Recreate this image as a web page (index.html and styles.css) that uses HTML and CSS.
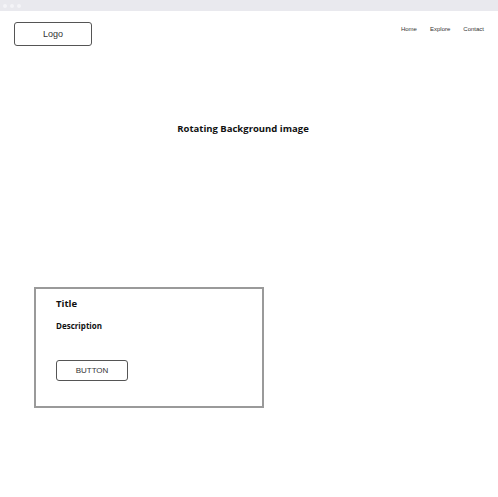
FILE: index.html
```html
<!DOCTYPE html>
<html lang="en">

<head>
    <meta charset="UTF-8">
    <title>Landing</title>
    <link rel="stylesheet" href="styles.css">
</head>

<body>
    <div class="chrome">
        <span class="dot"></span>
        <span class="dot"></span>
        <span class="dot"></span>
    </div>
    <header class="header">
        <div class="logo">Logo</div>
        <nav class="nav">
            <a href="#">Home</a>
            <a href="#">Explore</a>
            <a href="#">Contact</a>
        </nav>
    </header>
    <section class="hero">
        <h1>Rotating Background image</h1>
    </section>
    <div class="card">
        <h2>Title</h2>
        <p>Description</p>
        <button class="btn">BUTTON</button>
    </div>
</body>

</html>
```

FILE: styles.css
```css
* {
    margin: 0;
    padding: 0;
    box-sizing: border-box;
}

body {
    width: 498px;
    height: 497px;
    background: #fff;
    font-family: "Open Sans", "Noto Sans", sans-serif;
    color: #111;
}

.chrome {
    height: 11px;
    background: #e9e9ee;
    display: flex;
    align-items: center;
    gap: 3px;
    padding-left: 3px;
}

.chrome .dot {
    width: 4px;
    height: 4px;
    border-radius: 50%;
    background: #f4f4f7;
}

.header {
    display: flex;
    justify-content: space-between;
    align-items: flex-start;
    padding: 11px 14px 0 14px;
}

.logo {
    width: 78px;
    height: 24px;
    border: 1px solid #555;
    border-radius: 3px;
    font-family: "Liberation Sans", Arial, sans-serif;
    font-size: 9px;
    color: #333;
    display: flex;
    align-items: center;
    justify-content: center;
}

.nav {
    display: flex;
    gap: 13px;
    padding-top: 4px;
}

.nav a {
    font-family: "Liberation Sans", Arial, sans-serif;
    font-size: 6px;
    color: #333;
    text-decoration: none;
}

.hero {
    height: 241px;
    padding-top: 76px;
    padding-right: 12px;
    text-align: center;
}

.hero h1 {
    font-size: 9.5px;
    font-weight: bold;
}

.card {
    margin-left: 34px;
    width: 230px;
    height: 121px;
    border: 2px solid #9a9a9a;
    padding: 8px 20px;
}

.card h2 {
    font-size: 9.5px;
    font-weight: bold;
    line-height: 14px;
}

.card p {
    margin-top: 9px;
    font-size: 8px;
    font-weight: bold;
    line-height: 12px;
}

.btn {
    margin-top: 28px;
    width: 72px;
    height: 21px;
    border: 1px solid #555;
    border-radius: 3px;
    background: #fff;
    font-family: "Liberation Sans", Arial, sans-serif;
    font-size: 8px;
    color: #333;
}
```
